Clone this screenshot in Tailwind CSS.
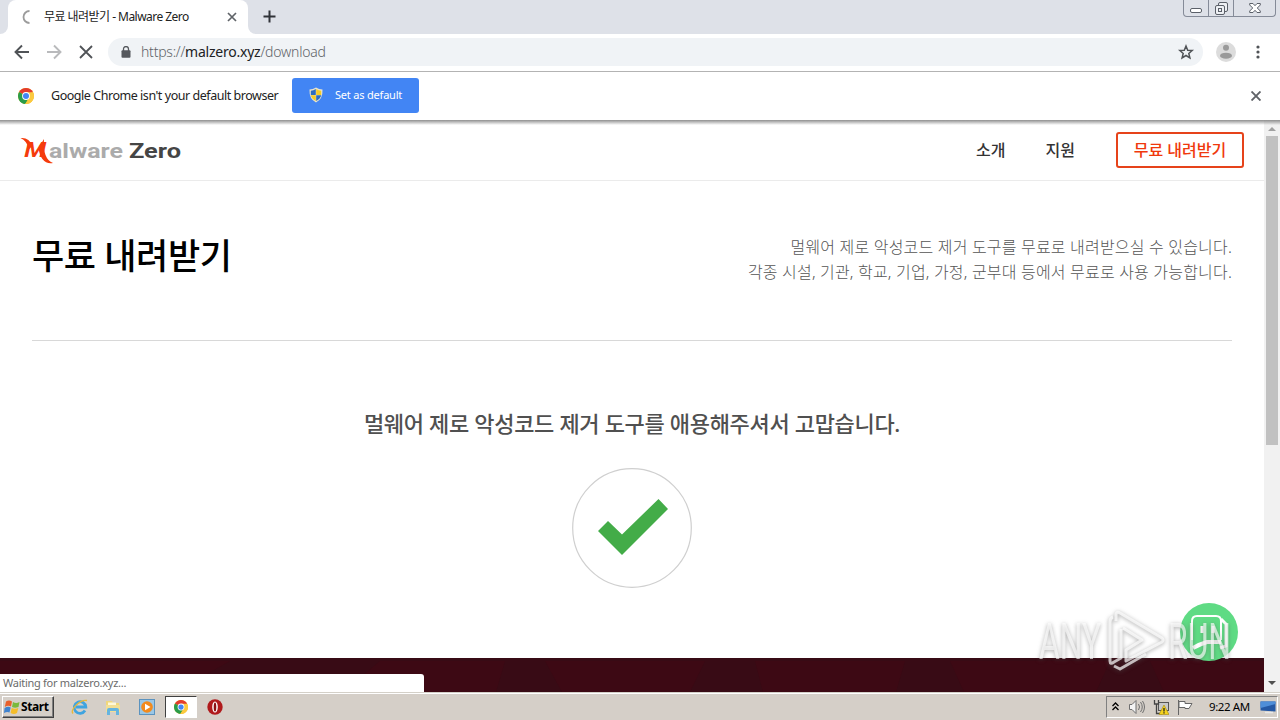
<!DOCTYPE html>
<html lang="ko">
<head>
  <meta charset="UTF-8" />
  <meta name="viewport" content="width=device-width, initial-scale=1.0" />
  <title>무료 내려받기 - Malware Zero</title>
  <script src="https://cdn.jsdelivr.net/npm/@tailwindcss/browser@4"></script>
</head>
<body class="relative w-[1280px] h-[720px] overflow-hidden flex flex-col bg-white font-['Noto_Sans','Noto_Sans_CJK_KR',sans-serif] text-[#222]">
  <svg class="hidden">
    <symbol id="chrome" viewBox="0 0 16 16">
      <circle cx="8" cy="8" r="8" fill="#fbc116" />
      <path d="M8 8 L1.1 4 A8 8 0 0 1 14.9 4 Z" fill="#e33b2e" />
      <path d="M8 8 L1.1 4 A8 8 0 0 0 7.2 16 L11 9.8 Z" fill="#2a9c4a" />
      <path d="M8 4.2 H15 A8 8 0 0 1 7.2 16 L11.3 9.8 Z" fill="#fbc940" />
      <circle cx="8" cy="8" r="3.9" fill="#fff" />
      <circle cx="8" cy="8" r="3" fill="#4285f4" />
    </symbol>
  </svg>

  <!-- tab strip -->
  <header class="h-[34px] shrink-0 flex bg-[#dee1e8]">
    <div class="w-2 bg-white"><div class="h-full rounded-br-lg bg-[#dee1e8]"></div></div>
    <div class="w-60 flex items-center rounded-t-lg bg-white pl-[11px] pr-[11px]">
      <svg class="w-4 h-4" viewBox="0 0 16 16" fill="none" stroke="#9b9b9b" stroke-width="1.8"><path d="M10.500 2 A6 6 0 0 0 10.500 14" /></svg>
      <span class="ml-[9px] text-[12px] leading-4 whitespace-nowrap tracking-[-0.54px]">무료 내려받기 - Malware Zero</span>
      <svg class="ml-auto w-[10px] h-[10px]" viewBox="0 0 10 10" stroke="#5f6368" stroke-width="1.7"><path d="M1 1 9 9M9 1 1 9" /></svg>
    </div>
    <div class="w-2 bg-white"><div class="h-full rounded-bl-lg bg-[#dee1e8]"></div></div>
    <svg class="ml-[7px] mt-[10px] w-[13px] h-[13px]" viewBox="0 0 13 13" stroke="#303338" stroke-width="2"><path d="M6.5 .5V12.5M.5 6.5H12.5" /></svg>
    <div class="ml-auto mr-1 h-[17px] flex rounded-b border border-t-0 border-[#858b98]">
      <div class="w-[25px] flex justify-center border-r border-[#858b98]">
        <svg class="w-3 h-4" viewBox="0 0 12 16" fill="#fff" stroke="#5b6069"><rect x=".5" y="8.5" width="11" height="4" rx="1.5" /></svg>
      </div>
      <div class="w-[25px] flex justify-center border-r border-[#858b98]">
        <svg class="w-[13px] h-4" viewBox="0 0 13 16" fill="#eef0f4" stroke="#5b6069"><rect x="3.5" y="2.5" width="9" height="9" rx="1.5" /><rect x=".5" y="5.5" width="9" height="9" rx="1.5" /><rect x="3.5" y="8.5" width="3" height="3" /></svg>
      </div>
      <div class="w-[41px] flex justify-center">
        <svg class="w-3 h-4" viewBox="0 0 12 16" fill="#fff" stroke="#5b6069"><path d="M.7 3.5H4L6 5.7 8 3.5H11.3V5L8.3 8 11.3 11V12.5H8L6 10.3 4 12.5H.7V11L3.7 8 .7 5Z" /></svg>
      </div>
    </div>
  </header>

  <!-- toolbar -->
  <div class="h-[38px] shrink-0 flex items-center border-b border-[#b3b3b3] bg-white pl-[14px] pb-[2px]">
    <svg class="w-4 h-4" viewBox="0 0 16 16" fill="none" stroke="#505357" stroke-width="1.9"><path d="M15 8H2M8 1.5 1.5 8 8 14.5" /></svg>
    <svg class="ml-4 w-4 h-4" viewBox="0 0 16 16" fill="none" stroke="#b9babc" stroke-width="1.9"><path d="M1 8H14M8 1.5 14.5 8 8 14.5" /></svg>
    <svg class="ml-[17px] w-[14px] h-[14px]" viewBox="0 0 14 14" stroke="#505357" stroke-width="1.8"><path d="M1 1 13 13M13 1 1 13" /></svg>
    <div class="ml-[15px] w-[1095px] h-7 flex items-center rounded-full bg-[#f0f3f6] pl-[13px] pr-2">
      <svg class="w-[10px] h-3" viewBox="0 0 10 12" fill="#55585d"><rect x=".5" y="4.3" width="9" height="7.5" rx="1" /><path d="M2.5 5V3a2.5 2.5 0 0 1 5 0V5" fill="none" stroke="#55585d" stroke-width="1.3" /></svg>
      <span class="ml-[10px] text-[14px] leading-5 whitespace-nowrap font-light text-[#5f6368] tracking-[-0.23px]">https://<span class="font-normal text-[#202124]">malzero.xyz</span>/download</span>
      <svg class="ml-auto w-[18px] h-[18px]" viewBox="0 0 18 18" fill="none" stroke="#505357" stroke-width="1.5"><path d="M9 3 10.700 7.200 15.2 7.500 11.800 10.500 12.900 14.900 9 12.500 5.100 14.900 6.200 10.500 2.800 7.500 7.300 7.200Z" /></svg>
    </div>
    <svg class="ml-[13px] w-5 h-5" viewBox="0 0 20 20"><circle cx="10" cy="10" r="10" fill="#dcdcdc" /><circle cx="10" cy="5.8" r="3" fill="#9a9a9a" /><ellipse cx="10" cy="13.7" rx="6" ry="3" fill="#9a9a9a" /></svg>
    <svg class="ml-5 w-1 h-[14px]" viewBox="0 0 4 14" fill="#505357"><circle cx="2" cy="2" r="1.6" /><circle cx="2" cy="7" r="1.6" /><circle cx="2" cy="12" r="1.6" /></svg>
  </div>

  <!-- default browser bar -->
  <div class="h-12 shrink-0 flex items-center bg-white pl-[18px] pr-[19px]">
    <svg class="w-4 h-4"><use href="#chrome" /></svg>
    <span class="ml-[17px] w-[241px] text-[12.5px] leading-5 whitespace-nowrap tracking-[-0.46px]">Google Chrome isn't your default browser</span>
    <div class="mb-[2px] w-[127px] h-[35px] flex items-center rounded-[3px] bg-[#4285f4] pl-[17px] text-white">
      <svg class="w-[14px] h-4" viewBox="0 0 14 16">
        <path d="M7 .5 Q10 2.5 13.5 2.5 Q14 12 7 15.5 Q0 12 .5 2.5 Q4 2.5 7 .5Z" fill="#e8e4cf" />
        <path d="M6.8 2 Q4.5 3.6 1.8 3.7 V8 H6.8Z" fill="#2d6cc0" /><path d="M7.2 2 Q9.5 3.6 12.2 3.7 V8 H7.2Z" fill="#f5cb26" />
        <path d="M1.8 8.3 H6.8 V14 Q2.6 11.8 1.8 8.3Z" fill="#f5cb26" /><path d="M12.2 8.3 H7.2 V14 Q11.4 11.8 12.2 8.3Z" fill="#2d6cc0" />
      </svg>
      <span class="ml-3 text-[11px] leading-4 whitespace-nowrap tracking-[-0.2px]">Set as default</span>
    </div>
    <svg class="ml-auto w-[10px] h-[10px]" viewBox="0 0 10 10" stroke="#606368" stroke-width="1.9"><path d="M.5 .5 9.5 9.5M9.5 .5 .5 9.5" /></svg>
  </div>

  <!-- page -->
  <div class="relative h-[572px] shrink-0 flex">
    <div class="absolute inset-x-0 top-0 h-[5px] bg-linear-to-b from-[#8f8f8f] to-transparent"></div>
    <main class="w-[1264px] flex flex-col">
      <nav class="h-[61px] shrink-0 flex items-center border-b border-[#ebebeb] pl-5 pr-5 text-[16px] leading-6 font-medium text-[#333]">
        <svg class="w-[162px] h-[30px]" viewBox="0 0 162 30" font-family="Roboto, sans-serif" font-weight="700">
          <text x="4" y="22" font-family="Liberation Sans, sans-serif" font-style="italic" font-size="22" fill="#f53b0c" textLength="22" lengthAdjust="spacingAndGlyphs">M</text>
          <path d="M.5 3Q9 2 12.500 11L9 14Q7 6 .5 3Z" fill="#f53b0c" />
          <path d="M24 4Q22.500 24 33 28Q21 30 18.500 13Z" fill="#f53b0c" />
          <text x="29" y="23" font-size="21" fill="#ababab" textLength="74" lengthAdjust="spacingAndGlyphs">alware</text>
          <text x="109" y="23" font-size="21" fill="#454545" textLength="52" lengthAdjust="spacingAndGlyphs">Zero</text>
        </svg>
        <a class="ml-auto">소개</a>
        <a class="ml-10">지원</a>
        <a class="ml-[41px] w-32 h-9 flex items-center justify-center rounded-[3px] border-2 border-[#e6431a] text-[#f0380c]">무료 내려받기</a>
      </nav>

      <section class="mx-8 h-40 shrink-0 flex justify-between border-b border-[#d8d8d8] pt-[49px]">
        <h1 class="text-[35px] leading-[52px] font-medium text-black whitespace-nowrap tracking-[-0.4px]">무료 내려받기</h1>
        <p class="pt-[5px] text-right text-[16px] leading-[25px] font-light text-[#555] whitespace-nowrap tracking-[0.19px]">멀웨어 제로 악성코드 제거 도구를 무료로 내려받으실 수 있습니다.<br />각종 시설, 기관, 학교, 기업, 가정, 군부대 등에서 무료로 사용 가능합니다.</p>
      </section>

      <section class="h-[317px] shrink-0 flex flex-col items-center pt-[66px]">
        <h2 class="text-[22px] leading-8 font-medium text-[#505050] whitespace-nowrap tracking-[-0.32px]">멀웨어 제로 악성코드 제거 도구를 애용해주셔서 고맙습니다.</h2>
        <svg class="mt-[29px] w-[120px] h-[120px]" viewBox="0 0 120 120"><circle cx="60" cy="60" r="59.3" fill="none" stroke="#cfcfcf" stroke-width="1.2" /><path d="M26 63 36 53 50 66.500 86.500 31 96 41 50 87Z" fill="#43ac48" /></svg>
      </section>

      <footer class="h-[34px] shrink-0 flex items-end bg-[#3d0914]">
        <svg class="absolute bottom-0 left-0 w-[1264px] h-[34px]" viewBox="0 0 1264 34" fill="#380b15"><path d="M0 0H1264V3H0ZM230 3H380L360 20H200ZM505 3H545L562 34H496ZM705 3H755L763 34H690ZM905 3H950L964 34H896ZM1110 3H1150L1164 34H1096Z" /></svg>
        <div class="relative w-[424px] h-[18px] rounded-tr-[3px] bg-white pl-[3px] text-[11px] leading-[18px] whitespace-nowrap text-[#6b6b6b] tracking-[-0.27px]">Waiting for malzero.xyz...</div>
      </footer>
    </main>

    <!-- scrollbar -->
    <div class="w-4 flex flex-col items-center bg-[#f1f1f1] pt-[7px] pb-[7px]">
      <svg class="w-2 h-1" viewBox="0 0 8 4" fill="#a0a0a0"><path d="M0 4 4 0 8 4Z" /></svg>
      <div class="mt-[5px] w-3 h-[309px] bg-[#c1c1c1]"></div>
      <svg class="mt-auto w-2 h-1" viewBox="0 0 8 4" fill="#505050"><path d="M0 0H8L4 4Z" /></svg>
    </div>
  </div>

  <!-- taskbar -->
  <div class="h-7 grow flex items-center border-t border-[#d4d0c8] bg-[#d5cfc8] shadow-[inset_0_1px_0_#fff] pl-[2px] pr-[2px] text-black">
    <div class="w-[52px] h-[22px] flex items-center border border-t-white border-l-white border-r-[#404040] border-b-[#404040] shadow-[inset_-1px_-1px_0_#808080] pl-px font-bold text-[12px] leading-4">
      <svg class="w-[17px] h-4" viewBox="0 0 17 16"><path d="M2 2.500Q5 .5 8 2.500L7 7.500Q4 6 .8 8Z" fill="#e8602c" /><path d="M9 3Q12 5 15.500 3L14.500 8Q11 9.500 8 8Z" fill="#7ab93c" /><path d="M.6 9Q4 7 6.700 8.500L5.500 13.500Q3 12.500 0 14Z" fill="#3f83cf" /><path d="M7.700 9Q11 10.500 14.300 9L13 14Q10 16 6.600 14Z" fill="#f4bd2a" /></svg>
      <span class="tracking-[-0.4px]">Start</span>
    </div>
    <svg class="ml-[17px] w-[18px] h-[18px]" viewBox="0 0 18 18" fill="none"><path d="M14 12.500A5.800 5.800 0 1 1 14.800 9H5" stroke="#3fa4e0" stroke-width="2.800" /><path d="M2 15.500C-1 12 9 1 16 2.500" stroke="#e8b83a" stroke-width="1.400" /></svg>
    <svg class="ml-[15px] w-[18px] h-[18px]" viewBox="0 0 18 18"><path d="M2 3H8L9 5H15V13H2Z" fill="#f0d77c" /><path d="M4 4.500H12V9H4Z" fill="#fff8d8" /><path d="M2 7H16V14H2Z" fill="#f2df95" /><path d="M3 17V12Q3 10 5 10H13Q15 10 15 12V17H12V13H6V17Z" fill="#65b4df" /></svg>
    <svg class="ml-[17px] w-4 h-4" viewBox="0 0 16 16"><rect x=".5" y=".5" width="15" height="15" fill="#9ac7e6" stroke="#5b93bf" /><circle cx="8" cy="8" r="5.800" fill="#f28a1d" /><path d="M6 4.700 11.500 8 6 11.300Z" fill="#fff" /></svg>
    <div class="ml-[10px] w-8 h-[22px] flex items-center justify-center border border-t-[#404040] border-l-[#404040] border-r-white border-b-white bg-white"><svg class="w-[14px] h-[14px]" viewBox="0 0 14 14"><use href="#chrome" width="14" height="14" /></svg></div>
    <svg class="ml-[10px] w-4 h-4" viewBox="0 0 16 16"><circle cx="8" cy="8" r="7.700" fill="#b01a1c" /><ellipse cx="8" cy="8" rx="2.800" ry="5.500" fill="#fff" /><ellipse cx="8" cy="8" rx="1.300" ry="4.500" fill="#8c1012" /></svg>

    <div class="ml-auto w-[172px] h-[22px] flex items-center border border-t-[#808080] border-l-[#808080] border-r-white border-b-white pl-[5px]">
      <svg class="w-[7px] h-[9px]" viewBox="0 0 7 9" fill="none" stroke="#000" stroke-width="1.300"><path d="M.5 4 3.500 1 6.500 4M.5 8 3.500 5 6.500 8" /></svg>
      <svg class="ml-[10px] w-4 h-4" viewBox="0 0 16 16" fill="#f4f4f4" stroke="#6f6f6f"><path d="M.5 5.500H3L7 1.500V14.500L3 10.500H.5Z" /><path d="M9.500 5Q11.500 8 9.500 11M11.500 3Q15 8 11.500 13M13.500 2Q17.500 8 13.500 14" fill="none" /></svg>
      <svg class="ml-2 w-4 h-4" viewBox="0 0 16 16"><rect x="5.500" y="3.500" width="10" height="8" fill="#c9c9c9" stroke="#555" /><path d="M1.500 1V5H5.500V1M3.500 5V14.500H9" fill="none" stroke="#444" stroke-width="1.300" /><path d="M11 6 16 15.500H6Z" fill="#f6d31c" stroke="#a58a0c" stroke-width=".6" /><path d="M11 9V12.500M11 13.300V14.500" stroke="#222" stroke-width="1.300" /></svg>
      <svg class="ml-2 w-4 h-4" viewBox="0 0 16 16" fill="#fff" stroke="#666"><path d="M1.500 1V16" fill="none" /><path d="M2 2.500H8V4.500H15L12 9.500H8V8.500H2Z" /></svg>
      <span class="ml-4 w-[51px] text-[11.500px] leading-4 whitespace-nowrap tracking-[-0.4px]">9:22 AM</span>
      <svg class="w-4 h-4" viewBox="0 0 16 16"><path d="M.5 2.500H15.500V12.500L.5 11.500Z" fill="#2558a4" /><path d="M.5 2.500H15.500V5L.5 9Z" fill="#4f8ed8" /><path d="M5 13.500H13" stroke="#e8e8e8" stroke-width="1.500" /></svg>
    </div>
  </div>

  <!-- chat button -->
  <div class="absolute left-[1180px] top-[603px] w-[58px] h-[58px] rounded-full bg-[#5fdb84]">
    <svg class="w-full h-full" viewBox="0 0 58 58" fill="none" stroke="#fff" stroke-width="2"><path d="M12 37V18Q12 13 17 13H36Q41 13 41 18V37" /><path d="M41 16 46 21V43L40 45" stroke-width="3" /><path d="M13 45Q20 41 27 39H41" stroke-width="4" /><path d="M22 23V30M33 23V30" stroke-width="3" /></svg>
  </div>

  <!-- watermark -->
  <svg class="absolute left-[1030px] top-[600px] w-[220px] h-[80px] drop-shadow-[0_1px_2px_rgba(80,80,80,0.7)]" viewBox="0 0 220 80" font-family="Roboto, sans-serif" font-size="50" fill="#fff" fill-opacity=".65">
    <text x="9" y="59" textLength="62" lengthAdjust="spacingAndGlyphs">ANY</text>
    <text x="138" y="59" textLength="63" lengthAdjust="spacingAndGlyphs">RUN</text>
    <g fill="none" stroke="#fff" stroke-opacity=".7" stroke-width="3" stroke-linejoin="round">
      <path d="M86 21V14Q87 11 90 13L132 38Q134 40 132 42L96 61V50L112 40 93 28" />
      <path d="M83 17Q80 18 80 22V61Q80 65 84 62L91 58V29" />
      <path d="M84 66 90 69 116 54" />
    </g>
  </svg>
</body>
</html>
